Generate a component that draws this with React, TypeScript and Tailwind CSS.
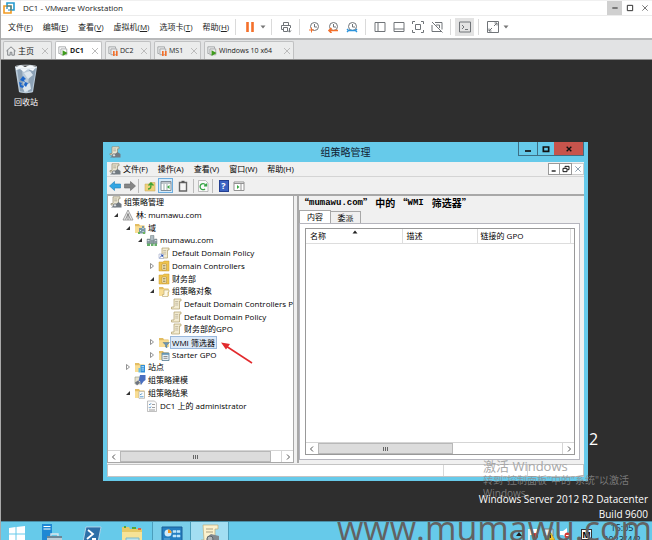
import type { ReactNode } from "react"

type IconName =
    | "gpmc" | "forest" | "domains" | "domain" | "link" | "ou" | "objects" | "gpo"
    | "wmi" | "starter" | "sites" | "modeling" | "results" | "report"

function Folder() {
    return (
        <>
            <path d="M1 2h4l1 1.5h4.500V11H1z" fill="#e3bd62" />
            <path d="M1 4.200h10V11H1z" fill="#f8dd94" />
        </>
    )
}

function Scroll() {
    return (
        <>
            <path d="M4 1h7v2H9.500v8H1.500V9H4z" fill="#f3ecd2" stroke="#b09f6c" strokeWidth=".7" />
            <path d="M5.200 3.500h3M5.200 5.200h3M5.200 7h3" stroke="#a8a08a" strokeWidth=".6" />
        </>
    )
}

const drawings: Record<IconName, ReactNode> = {
    gpmc: (
        <>
            <path d="M3 .8h7v2H8.500V9H1V7.500h2z" fill="#ece7d3" stroke="#8f886f" strokeWidth=".7" />
            <path d="M4.200 3h3M4.200 4.800h3" stroke="#8e8875" strokeWidth=".6" />
            <path d="M1 11.500h10.500V8L8.500 6 5 8.500z" fill="#727a81" />
            <circle cx="5" cy="9.300" r="1.600" fill="#d7dce0" stroke="#565d63" strokeWidth=".6" />
        </>
    ),
    forest: (
        <>
            <path d="M6 1 1 11h10z" fill="#eee" stroke="#8a8a8a" strokeWidth=".8" />
            <path d="M6 4v7M6 5 3.500 10.500M6 5l2.500 5.500" stroke="#777" strokeWidth=".8" />
        </>
    ),
    domains: (
        <>
            <Folder />
            <path d="M5 6h3V4h2v2h1.500v5.500H5z" fill="#7b98a6" />
            <path d="M6 8h1v1H6zM8.500 6h1v1h-1zM8.500 9h1v1h-1z" fill="#e7f5fa" />
            <path d="M4 10h2v2H4zM9 10h2v2H9z" fill="#6db65c" />
        </>
    ),
    domain: (
        <>
            <path d="M1 5h3v5H1zM4.500 1.500h3.500V10H4.500zM8.500 5H11V10H8.500z" fill="#8b9ba2" stroke="#64747b" strokeWidth=".4" />
            <path d="M5 3h2.500M5 5h2.500M1.500 6.500h2M9 6.500h1.500" stroke="#e6f1f5" strokeWidth=".8" />
            <path d="M1 9.500h3V12H1zM5 9.500h2.500V12H5zM8.500 9.500H11V12H8.500z" fill="#65b06a" />
        </>
    ),
    link: (
        <>
            <Scroll />
            <path d="M1 7h4.500v4.500H1z" fill="#fff" stroke="#8592b8" strokeWidth=".5" />
            <path d="M2 10.500 4.500 8M2.800 8h1.700v1.700" stroke="#264fb2" strokeWidth="1" fill="none" />
        </>
    ),
    ou: (
        <>
            <path d="M1 2h4l1-1h5v10H1z" fill="#eec44e" stroke="#c99a32" strokeWidth=".5" />
            <path d="M4 4h4.500v6H4z" fill="#fff0ba" stroke="#a9833b" strokeWidth=".5" />
            <path d="M5 5.500h2.500M5 7h2.500M5 8.500h2.500" stroke="#7b6e48" strokeWidth=".7" />
        </>
    ),
    objects: (
        <>
            <Folder />
            <path d="M6 5h5v2h-1v4.500H4.500V9.500H6z" fill="#fdf8e4" stroke="#b5a26a" strokeWidth=".6" />
        </>
    ),
    gpo: <Scroll />,
    wmi: (
        <>
            <Folder />
            <path d="M5 6.500h6.500L9 9v3L7.500 11V9z" fill="#6c95b5" stroke="#426982" strokeWidth=".4" />
        </>
    ),
    starter: (
        <>
            <Folder />
            <path d="M4 4h7v7.500H4z" fill="#e9f2f7" stroke="#557b93" strokeWidth=".8" />
            <path d="M4 4h7v1.800H4z" fill="#6595b4" />
            <path d="M5.500 7.500h4M5.500 9.300h4" stroke="#777" strokeWidth=".8" />
        </>
    ),
    sites: (
        <>
            <Folder />
            <path d="M6.500 4h4.500v7.500H6.500z" fill="#2f8fd9" />
            <path d="M4.500 7h2v4.500h-2z" fill="#67bde5" />
            <path d="M7.500 5.500h2.500M7.500 7.200h2.500M7.500 9h2.500" stroke="#dff5ff" strokeWidth=".7" />
        </>
    ),
    modeling: (
        <>
            <path d="M1 3h6v7H1z" fill="#e6e1cd" stroke="#8f947e" strokeWidth=".6" />
            <path d="M6 1h5.500v5L9.500 7.500 7 11 6 7H4.500z" fill="#4a6fc0" />
            <path d="M1 8.500 4 6.500l2 2-3 3z" fill="#6d7380" />
        </>
    ),
    results: (
        <>
            <Folder />
            <path d="M5 4.500h5.500v7H5z" fill="#f8fbfd" stroke="#9a9a9a" strokeWidth=".5" />
            <path d="m6 7 .8.8L8 6.300M6 9.800h3.500" stroke="#3384c4" strokeWidth=".8" fill="none" />
        </>
    ),
    report: (
        <>
            <path d="M1.500 1h7l2 2v8.500h-9z" fill="#fbfbfb" stroke="#989898" strokeWidth=".6" />
            <path d="m3 4 .8.8L5 3.300M3 7.300l.8.8L5 6.600" stroke="#2c79bd" strokeWidth=".8" fill="none" />
            <path d="M6 4.500h3M6 7.500h3M3 10h6" stroke="#777" strokeWidth=".7" />
        </>
    ),
}

function Icon({ name }: { name: IconName }) {
    return <svg viewBox="0 0 12 12" className="size-3 shrink-0" aria-hidden="true">{drawings[name]}</svg>
}

function Glyph({ children, className = "size-3" }: { children: ReactNode; className?: string }) {
    return (
        <svg viewBox="0 0 12 12" className={className} fill="none" stroke="#707478" strokeWidth="1" aria-hidden="true">
            {children}
        </svg>
    )
}

const indent = ["pl-0.5", "pl-0.5", "pl-3.5", "pl-[26px]", "pl-[38px]", "pl-[50px]"]

type Node = { level: number; icon: IconName; text: string; state?: "open" | "closed"; selected?: boolean }

const tree: Node[] = [
    { level: 0, icon: "gpmc", text: "组策略管理" },
    { level: 1, icon: "forest", text: "林: mumawu.com", state: "open" },
    { level: 2, icon: "domains", text: "域", state: "open" },
    { level: 3, icon: "domain", text: "mumawu.com", state: "open" },
    { level: 4, icon: "link", text: "Default Domain Policy" },
    { level: 4, icon: "ou", text: "Domain Controllers", state: "closed" },
    { level: 4, icon: "ou", text: "财务部", state: "open" },
    { level: 4, icon: "objects", text: "组策略对象", state: "open" },
    { level: 5, icon: "gpo", text: "Default Domain Controllers Policy" },
    { level: 5, icon: "gpo", text: "Default Domain Policy" },
    { level: 5, icon: "gpo", text: "财务部的GPO" },
    { level: 4, icon: "wmi", text: "WMI 筛选器", state: "closed", selected: true },
    { level: 4, icon: "starter", text: "Starter GPO", state: "closed" },
    { level: 2, icon: "sites", text: "站点", state: "closed" },
    { level: 2, icon: "modeling", text: "组策略建模" },
    { level: 2, icon: "results", text: "组策略结果", state: "open" },
    { level: 3, icon: "report", text: "DC1 上的 administrator" },
]

function TreeRow({ node }: { node: Node }) {
    return (
        <li className={`flex min-h-0 flex-1 items-center whitespace-nowrap ${indent[node.level]}`}>
            {node.level > 0 && (
                <span className="flex w-3 shrink-0 justify-center">
                    {node.state && (
                        <svg viewBox="0 0 6 6" className="size-1.5" aria-hidden="true">
                            {node.state === "open"
                                ? <path d="M5 1v4H1z" fill="#333" />
                                : <path d="M1.500.5 4.500 3l-3 2.500z" fill="#fff" stroke="#777" strokeWidth=".8" />}
                        </svg>
                    )}
                </span>
            )}
            <Icon name={node.icon} />
            <span className={node.selected ? "border border-[#9ab8dc] bg-[#dce9f8] px-px leading-[11px]" : "pl-0.5"}>
                {node.text}
            </span>
        </li>
    )
}

function ScrollBar({ thumb }: { thumb: string }) {
    return (
        <div className="flex h-3 shrink-0 border-t border-[#d5d5d5] bg-white">
            <button aria-label="向左滚动" className="flex w-3 items-center justify-center">
                <svg viewBox="0 0 6 6" className="size-1.5" fill="none" stroke="#555"><path d="M4 .5 1.500 3 4 5.500" /></svg>
            </button>
            <div className="flex-1">
                <div className={`flex h-full items-center justify-center border border-[#b8b8b8] bg-[#dcdcdc] ${thumb}`}>
                    <svg viewBox="0 0 6 6" className="size-1.5" stroke="#666"><path d="M.5 1v4M2.500 1v4M4.500 1v4" /></svg>
                </div>
            </div>
            <button aria-label="向右滚动" className="flex w-3 items-center justify-center border-l border-[#d5d5d5]">
                <svg viewBox="0 0 6 6" className="size-1.5" fill="none" stroke="#555"><path d="M2 .5 4.500 3 2 5.500" /></svg>
            </button>
        </div>
    )
}

function Caret() {
    return <svg viewBox="0 0 6 4" className="h-1 w-1.5" aria-hidden="true"><path d="M.5.5h5L3 3.500z" fill="#777" /></svg>
}

function ToolGroup({ children }: { children: ReactNode }) {
    return <div className="flex h-4 items-center border-l border-[#dadada] px-1">{children}</div>
}

function Tool({ label, active, children }: { label: string; active?: boolean; children: ReactNode }) {
    return (
        <button aria-label={label} className={`flex h-[18px] w-[19px] items-center justify-center ${active ? "bg-[#e3e3e3]" : ""}`}>
            {children}
        </button>
    )
}

const clock = <><circle cx="6.500" cy="5.500" r="4" /><path d="M6.500 3v3H9" /></>

function HostToolbar() {
    return (
        <div className="flex items-center">
            <ToolGroup>
                <Tool label="挂起"><Glyph><path d="M3.500 1v10M8.500 1v10" stroke="#f4702b" strokeWidth="2.600" /></Glyph></Tool>
                <button aria-label="电源选项" className="flex w-2 items-center justify-center"><Caret /></button>
            </ToolGroup>
            <ToolGroup>
                <Tool label="发送按键">
                    <Glyph><path d="M3.500 4.500v-3h5v3M3 8.500H1.500v-4h9V7M3.500 6.500h4v4h-4zM9.500 7v4M8 9.500l1.500 1.700L11 9.500" /></Glyph>
                </Tool>
            </ToolGroup>
            <ToolGroup>
                <Tool label="拍摄快照"><Glyph>{clock}<path d="M1 9h5M3.500 6.500v5" stroke="#f4702b" /></Glyph></Tool>
                <Tool label="恢复快照"><Glyph>{clock}<path d="M11 9.500H2M4.500 7 2 9.500 4.500 12" stroke="#f4702b" strokeWidth="1.600" /></Glyph></Tool>
                <Tool label="管理快照"><Glyph>{clock}<path d="M2 9.500h8M1 8l1.500 1.500L1 11M11 8 9.500 9.500 11 11" stroke="#2b93dc" strokeWidth="1.400" /></Glyph></Tool>
            </ToolGroup>
            <ToolGroup>
                <Tool label="显示库"><Glyph><path d="M1 1.500h10v9H1zM4 1.500v9" /></Glyph></Tool>
                <Tool label="缩略图栏"><Glyph><path d="M1 1.500h10v9H1zM1 8h10" /></Glyph></Tool>
                <Tool label="全屏"><Glyph><path d="M3.500 3.500h5v5h-5zM.5 3V.5H3M9 .5h2.500V3M11.500 9v2.500H9M3 11.500H.5V9" /></Glyph></Tool>
                <Tool label="Unity"><Glyph><path d="M4 1.500h7v7M1 4v6.500h7M5 4h3.500v3M1 1l10.500 10.500M6 10.500h5" /></Glyph></Tool>
            </ToolGroup>
            <ToolGroup>
                <Tool label="控制台视图" active><Glyph><path d="M.5 1h11v10H.5zM3 4l2 2-2 2M6 8.500h3" /></Glyph></Tool>
            </ToolGroup>
            <ToolGroup>
                <Tool label="自由拉伸"><Glyph><path d="M.5.500h11v11H.500zM7 5l3-3M7.500 2H10v2.500M5 7l-3 3M2 7.500V10h2.500" /></Glyph></Tool>
                <button aria-label="拉伸选项" className="flex w-2 items-center justify-center"><Caret /></button>
            </ToolGroup>
        </div>
    )
}

function VmIcon({ status }: { status: "run" | "pause" }) {
    return (
        <Glyph className="size-2.5 shrink-0">
            <path d="M2.500 9H1V1h8v2M3.500 3.500h7v7h-7z" stroke="#9a9da0" />
            {status === "run"
                ? <path d="M5.500 5v7l6-3.500z" fill="#3f9b1c" stroke="none" />
                : <path d="M7 6v6M10.500 6v6" stroke="#f4702b" strokeWidth="2" />}
        </Glyph>
    )
}

function VmTab({ text, icon, className }: { text: string; icon: ReactNode; className: string }) {
    return (
        <button className={`flex h-[18px] items-center gap-0.5 rounded-t-xs border border-b-0 border-[#c0c1c2] px-0.5 ${className}`}>
            {icon}
            <span className="flex-1 text-left whitespace-nowrap">{text}</span>
            <svg viewBox="0 0 8 8" className="size-2 shrink-0" stroke="#bcbcbc"><path d="m1 1 6 6M7 1 1 7" /></svg>
        </button>
    )
}

const hostMenu = [["文件", "F"], ["编辑", "E"], ["查看", "V"], ["虚拟机", "M"], ["选项卡", "T"], ["帮助", "H"]]
const guestMenu = ["文件(F)", "操作(A)", "查看(V)", "窗口(W)", "帮助(H)"]

function HostHeader() {
    return (
        <header>
            <div className="flex h-[15px] items-center border-t border-[#f0f0f0] bg-white pl-0.5">
                <svg viewBox="0 0 12 12" className="size-3" fill="none" strokeWidth="1.600" aria-hidden="true">
                    <path d="M4 4V1h7v7H8" stroke="#259bd0" />
                    <path d="M1 4h7v7H1z" stroke="#f19a22" />
                    <path d="M4 7V4h4v4H5" stroke="#1681b5" strokeWidth="1.200" />
                </svg>
                <h1 className="flex-1 pl-2">DC1 - VMware Workstation</h1>
                <button aria-label="最小化" className="flex h-full w-[15px] items-center justify-center bg-[#d0d0d0]"><Glyph className="size-2"><path d="M2 6h8" stroke="#222" strokeWidth="1.500" /></Glyph></button>
                <button aria-label="最大化" className="flex h-full w-[15px] items-center justify-center"><Glyph className="size-2"><path d="M2 2h8v8H2z" stroke="#333" strokeWidth="1.500" /></Glyph></button>
                <button aria-label="关闭" className="flex h-full w-[15px] items-center justify-center"><Glyph className="size-2"><path d="m2 2 8 8M10 2l-8 8" stroke="#333" /></Glyph></button>
            </div>
            <div className="flex h-[25px] items-center border-t border-b-2 border-t-[#ececec] border-b-[#b8b9ba] bg-white pl-[7px]">
                <nav className="flex w-[227px] gap-2.5 whitespace-nowrap">
                    {hostMenu.map(([text, key]) => <button key={key}>{text}(<u>{key}</u>)</button>)}
                </nav>
                <HostToolbar />
            </div>
            <div className="flex h-5 items-end gap-[3px] border-b border-[#8d8d8d] bg-[#e2e3e4] pl-0.5">
                <VmTab text="主页" className="w-[49px] bg-[#ebecec]" icon={<Glyph className="size-2.5"><path d="m.5 6 5.500-5 5.500 5M2 5v6h3V7.500h2V11h3V5" /></Glyph>} />
                <VmTab text="DC1" className="w-[47px] bg-white text-[7px] font-bold" icon={<VmIcon status="run" />} />
                <VmTab text="DC2" className="w-[46px] bg-[#ebecec] text-[7px]" icon={<VmIcon status="pause" />} />
                <VmTab text="MS1" className="w-[47px] bg-[#ebecec] text-[7px]" icon={<VmIcon status="pause" />} />
                <VmTab text="Windows 10 x64" className="w-[90px] bg-[#ebecec] text-[7px]" icon={<VmIcon status="run" />} />
            </div>
        </header>
    )
}

function GuestToolbar() {
    return (
        <div className="flex h-[19px] items-center border-b-2 border-[#a8a8a8]">
            <button aria-label="后退" className="flex w-[15px] justify-center"><Glyph><path d="m.5 6 5-4.500V4h6v4h-6v2.500z" fill="#32a5e3" stroke="#1e80bb" strokeWidth=".6" /></Glyph></button>
            <button aria-label="前进" className="flex w-[15px] justify-center"><Glyph><path d="m11.500 6-5-4.500V4h-6v4h6v2.500z" fill="#858585" stroke="#666" strokeWidth=".6" /></Glyph></button>
            <div className="ml-px flex h-3.5 items-center border-l border-[#bbb] pl-0.5">
                <button aria-label="向上" className="flex w-[17px] justify-center">
                    <Glyph><path d="M1 4h4l1-1.500h5V11H1z" fill="#eed17c" stroke="#c9a550" strokeWidth=".5" /><path d="M4 9c3 0 3-2 3-5M4.500 5.500 7 3l2.500 2.500" stroke="#40a334" strokeWidth="1.400" /></Glyph>
                </button>
                <button aria-label="显示树" className="flex size-[15px] items-center justify-center border border-[#6aade0] bg-[#d6ebfa]">
                    <Glyph><path d="M1 1.500h10v9H1z" fill="#fff" stroke="#7e8b96" /><path d="M1 3h10" stroke="#7e8b96" /><path d="M4 4v6M7 4v6" stroke="#9aa" /><path d="M9.500 5v4L7 7z" fill="#38a842" stroke="none" /></Glyph>
                </button>
                <button aria-label="剪贴板" className="flex w-5 justify-center"><Glyph><path d="M2.500 2.500h7V11h-7z" fill="#f5f5f5" stroke="#666" strokeWidth="1.400" /><path d="M4.500 1.800h3" stroke="#555" strokeWidth="2" /></Glyph></button>
            </div>
            <div className="flex h-3.5 items-center border-l border-[#bbb] px-[3px]">
                <button aria-label="刷新" className="flex w-3 justify-center"><Glyph><path d="M1.500.5h7L11 3v8.500H1.500z" fill="#fafafa" stroke="#999" strokeWidth=".6" /><path d="M9 6a3 3 0 1 0-1 3M7 5.800h2.500V3.500" stroke="#35a444" strokeWidth="1.300" /></Glyph></button>
            </div>
            <div className="flex h-3.5 items-center border-l border-[#bbb] pl-[3px]">
                <button aria-label="帮助" className="flex w-[15px] justify-center">
                    <span className="flex h-3 w-2.5 items-center justify-center border border-[#233f91] bg-[#3c63c2] text-[9px] font-bold text-white">?</span>
                </button>
                <button aria-label="操作窗格" className="flex w-[15px] justify-center"><Glyph><path d="M1 2h10v8.500H1z" fill="#fff" stroke="#929292" /><path d="M1 3.500h10M8 4v6" stroke="#929292" /><path d="M4 5v4l2.500-2z" fill="#38a842" stroke="none" /></Glyph></button>
            </div>
        </div>
    )
}

function TreePane() {
    return (
        <div className="flex w-[187px] flex-col overflow-hidden border border-t-0 border-[#a8a8a8] bg-white">
            <ul className="flex h-[216px] flex-col overflow-hidden">
                {tree.map((node, i) => <TreeRow key={i} node={node} />)}
            </ul>
            <div className="flex-1" />
            <ScrollBar thumb="w-[151px]" />
        </div>
    )
}

function DetailPane() {
    return (
        <section className="ml-[3px] flex min-w-0 flex-1 flex-col border-l-2 border-[#a8a8a8] bg-[#f0f0f0] pr-1 pb-[3px]">
            <h3 className="flex h-3.5 items-center font-['Liberation_Mono','Noto_Sans_CJK_SC',monospace] text-[9px] font-bold whitespace-nowrap">
                <span className="font-['Noto_Sans_CJK_SC',sans-serif] text-[10px]">“</span>
                mumawu.com
                <span className="font-['Noto_Sans_CJK_SC',sans-serif] text-[10px]">” 中的 “</span>
                WMI
                <span className="pl-2 font-['Noto_Sans_CJK_SC',sans-serif] text-[10px]">筛选器”</span>
            </h3>
            <div className="flex items-end">
                <button className="h-[13px] w-8 border border-b-0 border-[#a8a8a8] bg-white">内容</button>
                <button className="h-3 w-[30px] border border-b-0 border-l-0 border-[#a8a8a8]">委派</button>
            </div>
            <div className="flex flex-1 flex-col border border-[#b5b5bd] bg-white p-1 pl-[5px]">
                <div className="flex flex-1 flex-col border border-[#999]">
                    <table className="w-full table-fixed border-b border-[#ddd]">
                        <thead>
                            <tr className="h-3.5 text-left">
                                <th className="w-[96px] border-r border-[#ddd] pl-1 font-normal">
                                    <div className="relative">
                                        名称
                                        <svg viewBox="0 0 6 4" className="absolute top-0 left-[42px] h-1 w-1.5" aria-hidden="true"><path d="M3 .5 5.500 3.500h-5z" fill="#222" /></svg>
                                    </div>
                                </th>
                                <th className="w-[75px] border-r border-[#ddd] pl-1 font-normal">描述</th>
                                <th className="border-r border-[#ddd] pl-[3px] font-normal">链接的 GPO</th>
                                <td className="w-1" />
                            </tr>
                        </thead>
                    </table>
                    <div className="flex-1" />
                    <ScrollBar thumb="w-[135px]" />
                </div>
            </div>
        </section>
    )
}

function PolicyWindow() {
    return (
        <section className="absolute top-[82px] left-[102px] flex h-[339px] w-[485px] flex-col bg-[#66caea] px-1 pb-1">
            <div className="flex h-5 items-start">
                <span className="flex h-5 w-[66px] items-center pl-0.5"><Icon name="gpmc" /></span>
                <h2 className="flex-1 text-center text-[10px] leading-5 text-[#123]">组策略管理</h2>
                <div className="flex h-[14px] border border-t-0 border-[#3d6f85]">
                    <button aria-label="最小化" className="flex w-[18px] items-center justify-center"><Glyph className="size-2"><path d="M1.500 9h9" stroke="#111" strokeWidth="2.500" /></Glyph></button>
                    <button aria-label="最大化" className="flex w-[17px] items-center justify-center border-l border-[#3d6f85]"><Glyph className="size-2"><path d="M2 3h8v6.500H2z" stroke="#111" strokeWidth="2.500" /></Glyph></button>
                    <button aria-label="关闭" className="flex w-[29px] items-center justify-center bg-[#c7544c]"><Glyph className="size-2"><path d="m2.500 2.500 7 7M9.500 2.500l-7 7" stroke="#111" strokeWidth="2" /></Glyph></button>
                </div>
            </div>
            <div className="flex min-h-0 flex-1 flex-col bg-[#f0f0f0]">
                <div className="flex h-[15px] items-center border-b border-[#d4d4d4] pl-0.5">
                    <Icon name="gpmc" />
                    <nav className="flex flex-1 gap-2.5 pl-0.5 whitespace-nowrap">
                        {guestMenu.map((text) => <button key={text}>{text}</button>)}
                    </nav>
                    <button aria-label="最小化子窗口" className="flex h-3 w-3 items-center justify-center border border-[#999] bg-white"><Glyph className="size-2"><path d="M2.500 9h6" stroke="#111" strokeWidth="2" /></Glyph></button>
                    <button aria-label="还原子窗口" className="flex h-3 w-3 items-center justify-center border border-l-0 border-[#999] bg-white"><Glyph className="size-2"><path d="M4.500 4V2h6v5H8M1.500 5h6v5h-6z" stroke="#111" strokeWidth="1.500" /></Glyph></button>
                    <button aria-label="关闭子窗口" className="flex h-3 w-3 items-center justify-center border border-l-0 border-[#ccc] bg-white"><Glyph className="size-2"><path d="m2 2 8 8M10 2l-8 8" stroke="#8fa1b0" strokeWidth="1.500" /></Glyph></button>
                </div>
                <GuestToolbar />
                <div className="flex min-h-0 flex-1">
                    <TreePane />
                    <DetailPane />
                </div>
                <div className="mt-px flex h-[13px] border border-[#c4c4c4] bg-white">
                    <div className="flex-1" />
                    <div className="w-[84px] border-l border-[#d8d8d8]" />
                    <div className="w-14 border-l border-[#d8d8d8]" />
                </div>
            </div>
        </section>
    )
}

function Desktop() {
    return (
        <main className="relative min-h-0 flex-1 overflow-hidden bg-[#2e2e2e] text-white">
            <div className="absolute top-1 left-[5px] flex w-10 flex-col items-center">
                <svg viewBox="0 0 24 30" className="h-[30px] w-6" aria-hidden="true">
                    <path d="m1 3 4 25c2 1.500 12 1.500 14 0l4-25z" fill="#b9cad9" />
                    <path d="m3 4 3 23 4 1L8 5zM15 5l-1 23 4-1 4-23z" fill="#8da2b6" />
                    <path d="m2 3 5-2 4 2 5-2 6 2-3 4-5-2-4 3-4-3-4 1z" fill="#f4f8fb" />
                    <path d="m10 9 6-2 3 4-5 4zM8 23l8-4 1 6-6 3z" fill="#dce6ee" />
                    <path d="m6 16 3-4 3 3-2 1 1 2-3-1zM5 18l3 1-1 2 3 1-1 2-3-1zM11 18l3 1-2 4-2-2z" fill="#1d66c9" />
                    <ellipse cx="12" cy="3" rx="11" ry="1.800" fill="none" stroke="#dfe8f0" strokeWidth=".8" />
                </svg>
                <span className="mt-0.5">回收站</span>
            </div>
            <p className="absolute top-[367px] left-[588px] text-[16px] leading-6">2</p>
            <div className="text-black"><PolicyWindow /></div>
            <svg viewBox="0 0 34 24" className="absolute top-[281px] left-[219px] h-6 w-[34px]" aria-hidden="true">
                <path d="M32 22 6 5" stroke="#e22a2d" strokeWidth="1.500" />
                <path d="m1 1.500 9 1.500-4 5.500z" fill="#e22a2d" />
            </svg>
            <div className="absolute top-[398px] left-[482px] w-[150px] text-[10px] leading-[13px] text-[#8c8c8c]/80">
                <p className="text-[13px] leading-4 text-[#a8a8a8]">激活 Windows</p>
                <p>转到"控制面板"中的"系统"以激活 Windows。</p>
            </div>
            <div className="absolute right-1 -bottom-px text-right text-[10px] leading-[15px]">
                <p>Windows Server 2012 R2 Datacenter</p>
                <p>Build 9600</p>
            </div>
        </main>
    )
}

function Taskbar() {
    return (
        <footer className="relative flex h-[19px] shrink-0 items-start overflow-hidden border-t border-[#4c8ea6] bg-[#66caea]">
            <button aria-label="开始" className="flex w-[31px] justify-center pt-1">
                <svg viewBox="0 0 16 16" className="size-4" fill="#fff"><path d="m0 2 6.500-1v6.500H0zM7.500 1 16 0v7.500H7.500zM0 8.500h6.500V15L0 14zM7.500 8.500H16V16l-8.500-1z" /></svg>
            </button>
            <button aria-label="服务器管理器" className="flex w-10 justify-center pt-0.5">
                <svg viewBox="0 0 20 20" className="size-5"><path d="M0 0h10v20H0z" fill="#1e88d4" /><path d="M1.500 2.500h7M1.500 5h7" stroke="#fff" /><path d="M5 12h15v8H5z" fill="#6d8797" /><path d="M9 12v-2h7v2M5 15h15" fill="none" stroke="#d9e6ed" strokeWidth="1.400" /></svg>
            </button>
            <button aria-label="PowerShell" className="flex w-10 justify-center pt-1">
                <svg viewBox="0 0 20 18" className="h-[18px] w-5"><path d="M4 1h15l-3 15H1z" fill="#2d6fa8" stroke="#c3dcec" strokeWidth=".8" /><path d="m6 4 5 4-6 5M10 13h4" fill="none" stroke="#fff" strokeWidth="1.800" /></svg>
            </button>
            <button aria-label="文件资源管理器" className="flex w-10 justify-center pt-1">
                <svg viewBox="0 0 22 18" className="h-[18px] w-[22px]"><path d="M1 1h7l1 2h12v15H1z" fill="#e6c966" /><path d="M1 6h20v12H1z" fill="#f6e397" /><path d="M3 1h2M11 2h4" stroke="#53a83a" strokeWidth="2" /><path d="M17 3h3" stroke="#db654a" strokeWidth="2" /><path d="M5 12h13v6H5z" fill="#b9e4ee" stroke="#7fb9cb" /></svg>
            </button>
            <button aria-label="控制面板" className="flex h-full w-[39px] justify-center border-x border-[#4b9ebc] bg-[#7acfea] pt-1">
                <svg viewBox="0 0 22 18" className="h-[18px] w-[22px]"><path d="M1 1h20v15H1z" fill="#257fc1" stroke="#1a5e98" /><circle cx="7" cy="7" r="3.500" fill="#d2ebfa" /><path d="M7 7V3.500A3.500 3.500 0 0 1 10.500 7z" fill="#f29a28" /><path d="M12 4.500h3v2h-3zM16 4.500h3v2h-3zM12 9h3v2h-3zM16 9h3v2h-3zM3 13h6" fill="#bfe6fb" stroke="#bfe6fb" strokeWidth=".5" /></svg>
            </button>
            <button aria-label="组策略管理" className="flex h-full w-[38px] justify-center border-r border-[#4b9ebc] bg-[#a3def2] pt-0.5">
                <svg viewBox="0 0 20 20" className="size-5"><path d="M3 1h15v4h-3v14H1v-3h3z" fill="#fbf2ce" stroke="#bfae78" strokeWidth=".7" /><path d="M6 5h7M6 8h7" stroke="#aaa184" /><path d="m7 13 4-3 8 2v8H6z" fill="#828a90" /><circle cx="10" cy="15" r="3" fill="#b1b7bb" stroke="#5d656a" /></svg>
            </button>
            <div className="flex flex-1 items-start justify-end gap-1 pr-2.5 text-[9px] leading-3 text-[#10303e]">
                <svg viewBox="0 0 8 12" className="mt-1 h-3 w-2"><path d="m1 10 3-4 3 4z" fill="#222" /></svg>
                <svg viewBox="0 0 12 14" className="mt-1 h-3.5 w-3"><path d="M2 3v11" stroke="#fff" strokeWidth="1.500" /><path d="M3 3h7v6H3z" fill="#fff" /><circle cx="8" cy="10" r="3" fill="#d13a33" /></svg>
                <svg viewBox="0 0 12 14" className="mt-1 h-3.5 w-3"><path d="M1 3h9v7H1z" fill="#e8f1f4" stroke="#777" /><path d="m7.500 6 4.500 8H3z" fill="#f2c52d" stroke="#8b6c12" strokeWidth=".4" /><path d="M7.500 9v3" stroke="#222" /></svg>
                <svg viewBox="0 0 12 14" className="mt-1 h-3.5 w-3"><path d="M1 5h3l4-3v10L4 9H1z" fill="#fff" /><circle cx="8.500" cy="9.500" r="3" fill="#d13a33" /><path d="M7 9.500h3" stroke="#fff" /></svg>
                <span className="mx-1.5 mt-[7px] flex size-[11px] items-center justify-center border border-[#333] bg-white text-[9px] font-bold text-black">M</span>
                <time className="w-10 text-center whitespace-nowrap">15:05<br />2023/4/2</time>
            </div>
        </footer>
    )
}

export default function App() {
    return (
        <div className="relative flex h-screen flex-col overflow-hidden border-l border-[#a9a9a9] font-['Open_Sans','Noto_Sans_CJK_SC',sans-serif] text-[8px] leading-3 text-[#222]">
            <HostHeader />
            <Desktop />
            <Taskbar />
            <p className="absolute right-0 bottom-0 text-[34px] leading-6 text-[#626262]">www.mumawu.com</p>
        </div>
    )
}
